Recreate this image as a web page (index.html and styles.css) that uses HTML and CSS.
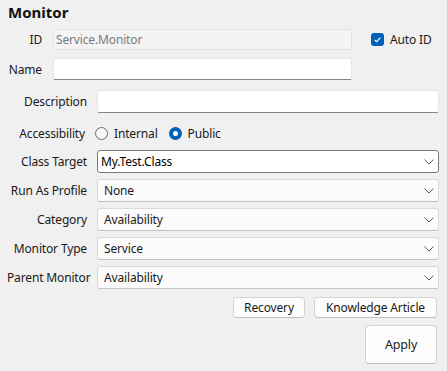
FILE: index.html
```html
<!DOCTYPE html>
<html>
<head>
<meta charset="utf-8">
<link rel="stylesheet" href="styles.css">
</head>
<body>
<div class="panel">
  <div class="title">Monitor</div>

  <div class="row row-id">
    <label class="lbl lbl-short">ID</label>
    <div class="input input-short input-disabled">Service.Monitor</div>
    <div class="check">
      <span class="checkbox"><svg width="13" height="13" viewBox="0 0 13 13"><path d="M3.6 6.8 L5.6 8.7 L9.4 4.6" fill="none" stroke="#ffffff" stroke-width="1.1"/></svg></span>
      <span class="check-text">Auto ID</span>
    </div>
  </div>

  <div class="row row-name">
    <label class="lbl lbl-short">Name</label>
    <div class="input input-short"></div>
  </div>

  <div class="row row-desc">
    <label class="lbl lbl-long">Description</label>
    <div class="input input-long"></div>
  </div>

  <div class="row row-access">
    <label class="lbl lbl-long lbl-access">Accessibility</label>
    <div class="radios">
      <span class="radio"></span><span class="radio-text">Internal</span>
      <span class="radio radio-on"></span><span class="radio-text">Public</span>
    </div>
  </div>

  <div class="row row-select row-first">
    <label class="lbl lbl-long">Class Target</label>
    <div class="select select-focus"><span class="val val-dark">My.Test.Class</span><svg class="chev" width="10" height="6" viewBox="0 0 10 6"><path d="M0.5 0.5 L5 5 L9.5 0.5" fill="none" stroke="#5f5f5f" stroke-width="1"/></svg></div>
  </div>
  <div class="row row-select">
    <label class="lbl lbl-long">Run As Profile</label>
    <div class="select"><span class="val">None</span><svg class="chev" width="10" height="6" viewBox="0 0 10 6"><path d="M0.5 0.5 L5 5 L9.5 0.5" fill="none" stroke="#5f5f5f" stroke-width="1"/></svg></div>
  </div>
  <div class="row row-select">
    <label class="lbl lbl-long">Category</label>
    <div class="select"><span class="val">Availability</span><svg class="chev" width="10" height="6" viewBox="0 0 10 6"><path d="M0.5 0.5 L5 5 L9.5 0.5" fill="none" stroke="#5f5f5f" stroke-width="1"/></svg></div>
  </div>
  <div class="row row-select">
    <label class="lbl lbl-long">Monitor Type</label>
    <div class="select"><span class="val">Service</span><svg class="chev" width="10" height="6" viewBox="0 0 10 6"><path d="M0.5 0.5 L5 5 L9.5 0.5" fill="none" stroke="#5f5f5f" stroke-width="1"/></svg></div>
  </div>
  <div class="row row-select">
    <label class="lbl lbl-long">Parent Monitor</label>
    <div class="select"><span class="val">Availability</span><svg class="chev" width="10" height="6" viewBox="0 0 10 6"><path d="M0.5 0.5 L5 5 L9.5 0.5" fill="none" stroke="#5f5f5f" stroke-width="1"/></svg></div>
  </div>

  <div class="buttons">
    <button class="btn btn-recovery">Recovery</button>
    <button class="btn btn-knowledge">Knowledge Article</button>
  </div>
  <div class="apply-row">
    <button class="btn btn-apply">Apply</button>
  </div>
</div>
</body>
</html>
```

FILE: styles.css
```css
* { box-sizing: border-box; }
html, body {
  margin: 0;
  padding: 0;
  background: #f0f0f0;
}
body {
  font-family: "Noto Sans", "Open Sans", sans-serif;
  font-size: 12px;
  letter-spacing: -0.15px;
  color: #1a1a1a;
}
.panel {
  width: 447px;
  height: 371px;
  padding: 2px 9px 0 7px;
  display: flex;
  flex-direction: column;
}
.title {
  font-size: 15px;
  font-weight: 700;
  line-height: 20px;
  padding-left: 1px;
  letter-spacing: 0;
  color: #111;
}
.row {
  display: flex;
  align-items: center;
}
.lbl {
  text-align: right;
  white-space: nowrap;
  flex: none;
}
.lbl-short { width: 35px; margin-right: 11px; }
.lbl-long { width: 80px; margin-right: 10px; }
.lbl-access { width: 78px; margin-right: 10px; }

.row-id { margin-top: 7px; }
.row-name { margin-top: 8px; }
.row-desc { margin-top: 10px; }
.row-access { margin-top: 9px; height: 23px; }
.row-select { margin-top: 6px; }
.row-first { margin-top: 5px; }

.input {
  background: #ffffff;
  border: 1px solid #e6e6e6;
  border-bottom: 1px solid #858585;
  border-radius: 2px;
  height: 22px;
  padding: 0 4px;
  display: flex;
  align-items: center;
  flex: none;
}
.input-short { width: 299px; }
.input-long { width: 342px; height: 23px; }
.input-disabled {
  height: 21px;
  background: #f4f4f4;
  border: 1px solid #e3e3e3;
  color: #7a7a7a;
  padding: 0 2px;
}
.check {
  display: flex;
  align-items: center;
  margin-left: 19px;
}
.checkbox {
  width: 13px;
  height: 13px;
  border-radius: 3px;
  background: #005fb8;
  display: inline-flex;
}
.check-text { margin-left: 6px; }

.radios {
  display: flex;
  align-items: center;
}
.radio {
  width: 13px;
  height: 13px;
  border-radius: 50%;
  border: 1px solid #6e6e6e;
  background: #f7f7f7;
  margin-right: 6px;
  flex: none;
}
.radio-on {
  border: 4px solid #005fb8;
  background: #ffffff;
  margin-left: 11px;
}
.radio-text { line-height: 14px; }

.select {
  width: 342px;
  height: 23px;
  background: #fbfbfb;
  border: 1px solid #d9d9d9;
  border-bottom-color: #c2c2c2;
  border-radius: 3px;
  display: flex;
  align-items: center;
  justify-content: space-between;
  padding: 0 4px 0 6px;
  flex: none;
}
.select-focus {
  background: #ffffff;
  border: 1px solid #7b7b7b;
  padding-left: 3px;
}
.val { color: #1a1a1a; }
.val-dark { color: #000; }
.chev { flex: none; margin-top: 1px; }

.buttons {
  display: flex;
  justify-content: flex-end;
  gap: 9px;
  margin-top: 8px;
  padding-right: 1px;
}
.btn {
  font-family: inherit;
  font-size: 12px;
  letter-spacing: -0.15px;
  color: #1a1a1a;
  background: #fdfdfd;
  border: 1px solid #d4d4d4;
  border-bottom-color: #c0c0c0;
  border-radius: 4px;
  padding: 0;
  margin: 0;
}
.btn-recovery { width: 72px; height: 21px; }
.btn-knowledge { width: 123px; height: 21px; }
.apply-row {
  display: flex;
  justify-content: flex-end;
  margin-top: 7px;
  padding-right: 1px;
}
.btn-apply { width: 72px; height: 39px; font-size: 12.5px; }
```
